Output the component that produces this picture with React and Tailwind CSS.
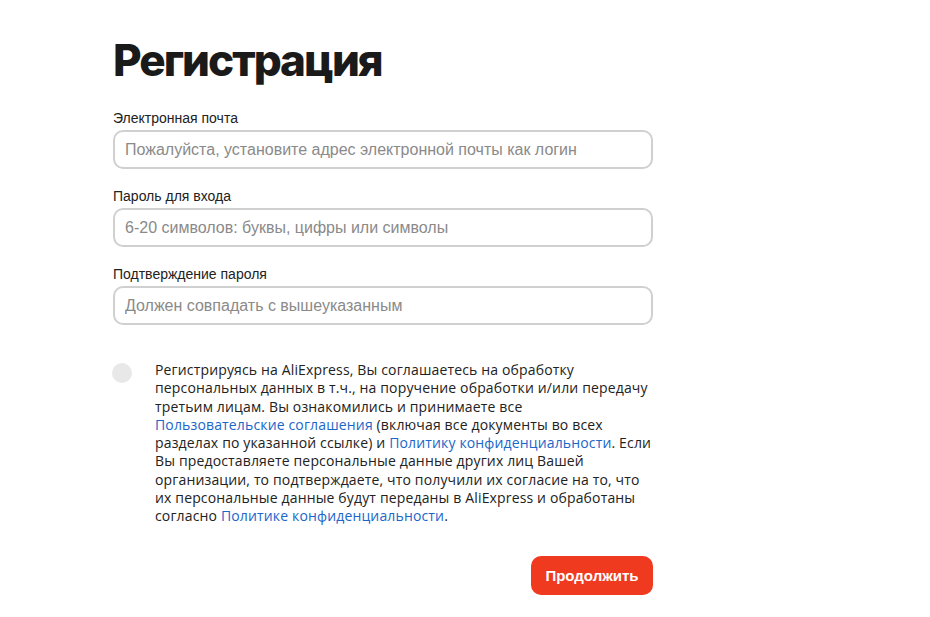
export default function App() {
  const field = (label, ph, type = "text") => (
    <div className="flex flex-col">
      <label className="text-[14px] leading-[16px] text-[#222] mb-[4px]">{label}</label>
      <input
        type={type}
        placeholder={ph}
        className="h-[39px] w-full rounded-[10px] border-2 border-[#d0d0d0] px-[10px] font-['Liberation_Sans',Arial,sans-serif] text-[16px] text-[#222] placeholder:text-[#8a8a8a] outline-none"
      />
    </div>
  );
  return (
    <div className="min-h-[617px] w-[930px] bg-white font-['Liberation_Sans',Arial,sans-serif]">
      <div className="ml-[113px] w-[540px] pt-[34px]">
        <h1 className="font-['Inter','Liberation_Sans',sans-serif] text-[44px] leading-[52px] font-extrabold tracking-[-2px] text-[#1a1a1a]">Регистрация</h1>
        <div className="mt-[24px] flex flex-col gap-[19px]">
          {field("Электронная почта", "Пожалуйста, установите адрес электронной почты как логин")}
          {field("Пароль для входа", "6-20 символов: буквы, цифры или символы", "password")}
          {field("Подтверждение пароля", "Должен совпадать с вышеуказанным", "password")}
        </div>
        <div className="mt-[36px] flex">
          <div className="mt-[2px] -ml-[1px] h-[20px] w-[20px] shrink-0 rounded-full bg-[#e8e8e8]" />
          <p className="ml-[23px] whitespace-nowrap font-['Open_Sans','Noto_Sans',sans-serif] text-[14px] leading-[18.25px] tracking-[0.15px] text-[#222]">
            Регистрируясь на AliExpress, Вы соглашаетесь на обработку<br />
            персональных данных в т.ч., на поручение обработки и/или передачу<br />
            третьим лицам. Вы ознакомились и принимаете все<br />
            <a className="text-[#1a66c9]">Пользовательские соглашения</a> (включая все документы во всех<br />
            разделах по указанной ссылке) и <a className="text-[#1a66c9]">Политику конфиденциальности</a>. Если<br />
            Вы предоставляете персональные данные других лиц Вашей<br />
            организации, то подтверждаете, что получили их согласие на то, что<br />
            их персональные данные будут переданы в AliExpress и обработаны<br />
            согласно <a className="text-[#1a66c9]">Политике конфиденциальности</a>.
          </p>
        </div>
        <div className="mt-[31px] flex justify-end">
          <button className="h-[39px] w-[122px] rounded-[10px] bg-[#f03a1f] font-['Liberation_Sans',Arial,sans-serif] text-[15px] font-bold text-white">
            Продолжить
          </button>
        </div>
      </div>
    </div>
  );
}
